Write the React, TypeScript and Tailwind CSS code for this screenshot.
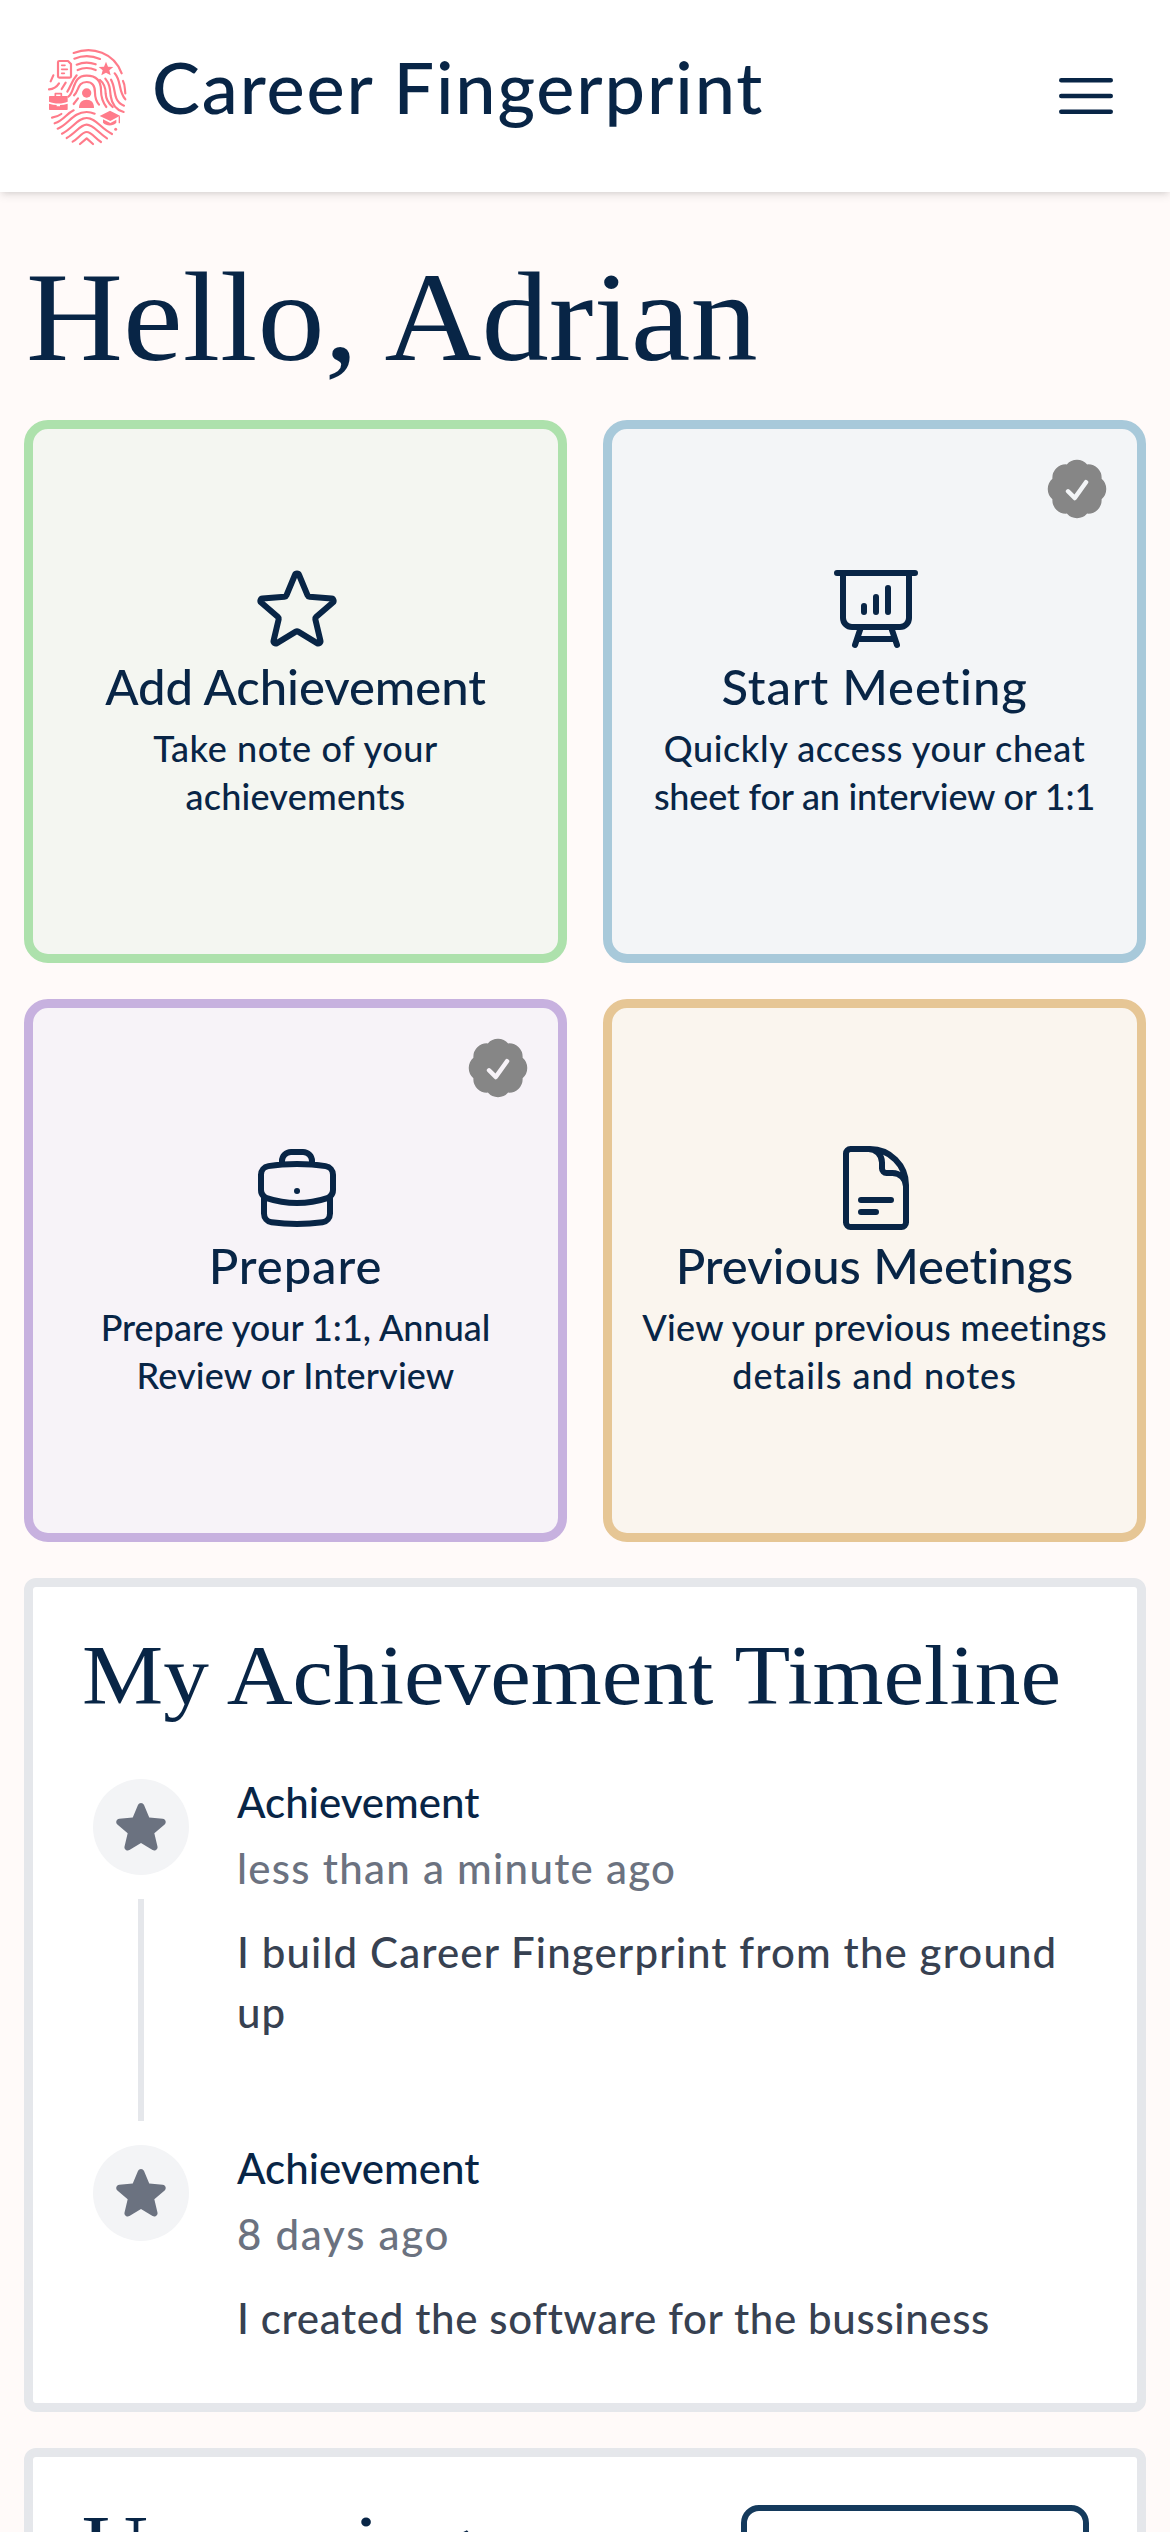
import type { ReactNode } from "react";
import {
  HiCheckBadge,
  HiOutlineBars3,
  HiOutlineBriefcase,
  HiOutlineDocumentText,
  HiOutlinePresentationChartBar,
  HiOutlineStar,
  HiStar,
} from "react-icons/hi2";

function Logo() {
  return (
    <svg
      viewBox="0 0 360 390"
      className="h-[130px] w-[120px] shrink-0"
      fill="none"
      stroke="#ff7b8a"
      strokeWidth="6.5"
      strokeLinecap="round"
      strokeLinejoin="round"
    >
      {/* upper arcs */}
      <path d="M131 66C187 44 253 65 275 127" />
      <path d="M133 83C158 73 184 73 210 84" />
      <path d="M140 101C160 93 178 93 197 100" />
      <path d="M143 117C161 109 179 109 197 117" />
      {/* central loops */}
      <path d="M115 197C136 182 126 134 170 134C205 134 213 155 213 178C213 200 219 215 229 228" />
      <path d="M131 219L144 202" />
      <path d="M132 193C147 180 142 153 170 153C190 153 195 170 195 185C195 200 200 212 207 221" />
      {/* right ridges */}
      <path d="M210 147C226 160 227 175 227 188C228 204 236 218 248 228" />
      <path d="M226 143C240 160 240 175 242 195C246 222 262 238 281 243" />
      <path d="M243 146C254 165 252 185 259 202C264 214 272 220 282 224" />
      <path d="M254 127C275 150 264 180 286 205" />
      <path d="M279 150C286 162 284 175 286 187" />
      {/* left ridges */}
      <path d="M70 133L62 151" />
      <path d="M87 157C80 168 70 174 57 175" />
      <path d="M107 155L95 174" />
      <path d="M140 133C125 150 121 168 112 182" />
      {/* lower chevrons */}
      <path d="M66 260C78 258 86 255 94 249" />
      <path d="M74 277C102 268 109 248 131 238" />
      <path d="M83 293C117 280 128 243 170 243C181 243 187 245 194 248" />
      <path d="M96 308C128 292 143 261 170 261C197 261 211 291 246 309" />
      <path d="M110 321C137 306 151 281 170 281C190 281 204 305 231 322" />
      <path d="M128 332C145 323 156 303 170 303C184 303 196 322 213 333" />
      <path d="M150 339L170 322L189 339" />
      {/* document */}
      <path d="M88 90H114L123 99V136Q123 140 119 140H88Q84 140 84 136V94Q84 90 88 90Z" />
      <path d="M95 103H105M95 115H112M95 127H103" strokeWidth="5" />
      <g fill="#ff7b8a" stroke="none">
        <path d="M228 92L234 107L250 108L238 118L242 133L228 125L214 133L218 118L206 108L222 107Z" />
        {/* person */}
        <circle cx="170" cy="186" r="14" />
        <path d="M147 231C147 214 156 206 170 206C184 206 192 214 192 231Z" />
        {/* briefcase */}
        <path d="M59 195H111Q113 195 113 197V212C98 219 73 219 57 212V197Q57 195 59 195Z" />
        <path d="M57 218Q70 222 80 222V226H90V222Q101 222 113 218V235Q113 237 111 237H59Q57 237 57 235Z" />
        {/* graduation cap */}
        <path d="M209 255L240 239L270 254L241 270Z" />
        <path d="M219 265L241 276L259 266V275C249 286 229 286 219 275Z" />
        <circle cx="257" cy="295" r="4.5" />
      </g>
      <path d="M76 194V188H94V194" strokeWidth="5" />
      <path d="M268 257V275" strokeWidth="4" />
    </svg>
  );
}

type CardProps = {
  tone: string;
  icon: ReactNode;
  title: ReactNode;
  lines: ReactNode;
  premium?: boolean;
};

function ActionCard({ tone, icon, title, lines, premium }: CardProps) {
  return (
    <button
      className={`relative flex aspect-square flex-col items-center justify-center rounded-[24px] border-[9px] pb-0.5 text-center ${tone}`}
    >
      {premium && <HiCheckBadge className="absolute top-6 right-6 size-[72px] text-[#868686]" />}
      <span className="ml-[3px] block">{icon}</span>
      <span className="block text-[49px] leading-[58px] whitespace-nowrap">{title}</span>
      <span className="mt-[9px] flex flex-col text-4xl leading-[48px] whitespace-nowrap">{lines}</span>
    </button>
  );
}

function Entry({ when, children, last }: { when: ReactNode; children: ReactNode; last?: boolean }) {
  return (
    <li className="flex gap-12">
      <div className="flex w-24 flex-col items-center">
        <span className="flex size-24 shrink-0 items-center justify-center rounded-full bg-gray-100">
          <HiStar className="size-[60px] text-[#6b7280]" />
        </span>
        {!last && <span className="my-6 w-1.5 flex-1 bg-[#e5e7eb]" />}
      </div>
      <div className={`-mt-[7px] text-[42px] leading-[60px] whitespace-nowrap ${last ? "" : "pb-[103px]"}`}>
        <h3>Achievement</h3>
        <p className="mt-1.5 text-[#6b7280]">{when}</p>
        <p className="mt-6 text-[#374151]">{children}</p>
      </div>
    </li>
  );
}

export default function App() {
  return (
    <div className="h-[2532px] w-full overflow-hidden bg-[#fffaf9] font-['Lato',sans-serif] font-medium text-[#082546]">
      <header className="flex h-48 items-center justify-between bg-white pr-12 pl-[30px] shadow-[0_3px_9px_rgba(0,0,0,0.1),0_3px_6px_-3px_rgba(0,0,0,0.1)]">
        <div className="flex items-center gap-0.5">
          <Logo />
          <span className="pb-5 text-[72px] leading-[72px] tracking-[1.88px]">Career Fingerprint</span>
        </div>
        <HiOutlineBars3 className="size-[72px]" />
      </header>

      <main className="px-6 pt-[53px]">
        <h1 className="mb-[31px] ml-0.5 origin-left scale-x-[1.05] font-['Liberation_Serif',serif] text-[128px] leading-[144px] font-normal">
          Hello, Adrian
        </h1>

        <div className="grid grid-cols-2 gap-9">
          <ActionCard
            tone="border-[#ade1ac] bg-[#f4f6f1]"
            icon={<HiOutlineStar className="size-24" />}
            title={<span className="tracking-[-0.05px]">Add Achievement</span>}
            lines={
              <>
                <span className="tracking-[0.6px]">Take note of your</span>
                <span className="tracking-[0.2px]">achievements</span>
              </>
            }
          />
          <ActionCard
            premium
            tone="border-[#a8c9da] bg-[#f3f5f7]"
            icon={<HiOutlinePresentationChartBar className="size-24" />}
            title={<span className="tracking-[0.85px]">Start Meeting</span>}
            lines={
              <>
                <span className="tracking-[0.6px]">Quickly access your cheat</span>
                <span className="tracking-[-0.2px]">sheet for an interview or 1:1</span>
              </>
            }
          />
          <ActionCard
            premium
            tone="border-[#c7b1df] bg-[#f7f3f8]"
            icon={<HiOutlineBriefcase className="size-24" />}
            title={<span className="tracking-[0.9px]">Prepare</span>}
            lines={
              <>
                <span>Prepare your 1:1, Annual</span>
                <span className="tracking-[0.15px]">Review or Interview</span>
              </>
            }
          />
          <ActionCard
            tone="border-[#e6c695] bg-[#faf5ee]"
            icon={<HiOutlineDocumentText className="size-24" />}
            title={<span className="tracking-[-0.05px]">Previous Meetings</span>}
            lines={
              <>
                <span className="tracking-[0.3px]">View your previous meetings</span>
                <span className="tracking-[1px]">details and notes</span>
              </>
            }
          />
        </div>

        <section className="mt-9 rounded-xl border-[9px] border-[#e5e7eb] bg-white px-[49px] pt-[39px] pb-[55px]">
          <h2 className="origin-left scale-x-[1.087] font-['Liberation_Serif',serif] text-[84px] leading-[100px] font-normal whitespace-nowrap">
            My Achievement Timeline
          </h2>
          <ul className="mt-[53px] ml-[11px]">
            <Entry when={<span className="tracking-[1.28px]">less than a minute ago</span>}>
              <span className="tracking-[1.12px]">
                I build Career Fingerprint from the ground
                <br />
                up
              </span>
            </Entry>
            <Entry last when={<span className="tracking-[1.75px]">8 days ago</span>}>
              <span className="tracking-[0.65px]">I created the software for the bussiness</span>
            </Entry>
          </ul>
        </section>

        <section className="mt-9 flex h-[400px] items-start justify-between rounded-xl border-[9px] border-[#e5e7eb] bg-white pr-12 pl-[49px]">
          <h2 className="origin-left scale-x-[1.087] pt-[39px] font-['Liberation_Serif',serif] text-[84px] leading-[100px] font-normal tracking-[0.6px]">
            Upcoming
          </h2>
          <button className="mt-12 h-[120px] w-[348px] rounded-[18px] border-[6px] border-[#143a5c]" />
        </section>
      </main>
    </div>
  );
}
